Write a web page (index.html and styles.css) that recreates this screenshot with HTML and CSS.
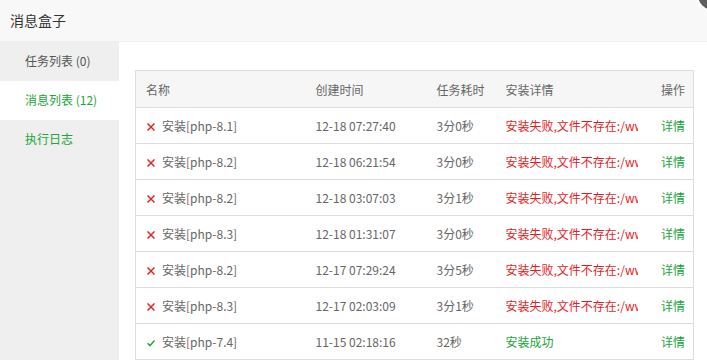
FILE: index.html
```html
<!DOCTYPE html>
<html lang="zh-CN">
<head>
<meta charset="utf-8">
<title>消息盒子</title>
<link rel="stylesheet" href="styles.css">
</head>
<body>
<div class="layer">
  <div class="title">消息盒子</div>
  <span class="close"></span>
  <div class="main">
    <ul class="side">
      <li class="item">任务列表 (0)</li>
      <li class="item active">消息列表 (12)</li>
      <li class="item green">执行日志</li>
    </ul>
    <div class="content">
      <table class="tbl">
        <colgroup>
          <col class="c1"><col class="c2"><col class="c3"><col class="c4"><col class="c5">
        </colgroup>
        <thead>
          <tr><th>名称</th><th>创建时间</th><th>任务耗时</th><th>安装详情</th><th class="r">操作</th></tr>
        </thead>
        <tbody>
          <tr><td><svg class="ic" viewBox="0 0 8 8"><path d="M0.5 0.5L7.5 7.5M7.5 0.5L0.5 7.5" stroke="#e32424" stroke-width="1.5"/></svg>安装[php-8.1]</td><td>12-18 07:27:40</td><td>3分0秒</td><td class="fail"><span class="trunc">安装失败,文件不存在:/www/server/php</span></td><td class="r"><a class="lnk">详情</a></td></tr>
          <tr><td><svg class="ic" viewBox="0 0 8 8"><path d="M0.5 0.5L7.5 7.5M7.5 0.5L0.5 7.5" stroke="#e32424" stroke-width="1.5"/></svg>安装[php-8.2]</td><td>12-18 06:21:54</td><td>3分0秒</td><td class="fail"><span class="trunc">安装失败,文件不存在:/www/server/php</span></td><td class="r"><a class="lnk">详情</a></td></tr>
          <tr><td><svg class="ic" viewBox="0 0 8 8"><path d="M0.5 0.5L7.5 7.5M7.5 0.5L0.5 7.5" stroke="#e32424" stroke-width="1.5"/></svg>安装[php-8.2]</td><td>12-18 03:07:03</td><td>3分1秒</td><td class="fail"><span class="trunc">安装失败,文件不存在:/www/server/php</span></td><td class="r"><a class="lnk">详情</a></td></tr>
          <tr><td><svg class="ic" viewBox="0 0 8 8"><path d="M0.5 0.5L7.5 7.5M7.5 0.5L0.5 7.5" stroke="#e32424" stroke-width="1.5"/></svg>安装[php-8.3]</td><td>12-18 01:31:07</td><td>3分0秒</td><td class="fail"><span class="trunc">安装失败,文件不存在:/www/server/php</span></td><td class="r"><a class="lnk">详情</a></td></tr>
          <tr><td><svg class="ic" viewBox="0 0 8 8"><path d="M0.5 0.5L7.5 7.5M7.5 0.5L0.5 7.5" stroke="#e32424" stroke-width="1.5"/></svg>安装[php-8.2]</td><td>12-17 07:29:24</td><td>3分5秒</td><td class="fail"><span class="trunc">安装失败,文件不存在:/www/server/php</span></td><td class="r"><a class="lnk">详情</a></td></tr>
          <tr><td><svg class="ic" viewBox="0 0 8 8"><path d="M0.5 0.5L7.5 7.5M7.5 0.5L0.5 7.5" stroke="#e32424" stroke-width="1.5"/></svg>安装[php-8.3]</td><td>12-17 02:03:09</td><td>3分1秒</td><td class="fail"><span class="trunc">安装失败,文件不存在:/www/server/php</span></td><td class="r"><a class="lnk">详情</a></td></tr>
          <tr><td><svg class="ic" viewBox="0 0 8 8"><path d="M0.5 4.2L3 6.6L7.6 1.4" stroke="#20a53a" stroke-width="1.5" fill="none"/></svg>安装[php-7.4]</td><td>11-15 02:18:16</td><td>32秒</td><td class="succ">安装成功</td><td class="r"><a class="lnk">详情</a></td></tr>
          <tr><td><svg class="ic" viewBox="0 0 8 8"><path d="M0.5 4.2L3 6.6L7.6 1.4" stroke="#20a53a" stroke-width="1.5" fill="none"/></svg>安装[php-7.4]</td><td>11-15 02:15:02</td><td>30秒</td><td class="succ">安装成功</td><td class="r"><a class="lnk">详情</a></td></tr>
        </tbody>
      </table>
    </div>
  </div>
</div>
</body>
</html>
```

FILE: styles.css
```css
* { box-sizing: border-box; }
html, body {
  margin: 0;
  padding: 0;
  width: 707px;
  height: 360px;
  overflow: hidden;
  background: #fff;
  font-family: "Noto Sans CJK SC", "Noto Sans", sans-serif;
  font-size: 12px;
  color: #666;
}
.layer {
  position: relative;
  width: 707px;
  height: 360px;
}
.title {
  height: 42px;
  line-height: 41px;
  padding-left: 10px;
  font-size: 14px;
  color: #333;
  background: #f8f8f8;
  border-bottom: 1px solid #eee;
}
.close {
  position: absolute;
  left: 698px;
  top: -20px;
  width: 30px;
  height: 30px;
  border-radius: 50%;
  background: #5f5f5f;
  box-shadow: 0 0 0 2px #fff;
}
.main {
  display: flex;
  height: 318px;
}
.side {
  list-style: none;
  margin: 0;
  padding: 0;
  width: 119px;
  flex: none;
  background: #efefef;
}
.item {
  height: 39px;
  line-height: 38px;
  padding-left: 25px;
  color: #555;
  font-size: 12px;
}
.item.active {
  background: #fff;
  color: #20a53a;
}
.item.green { color: #20a53a; }
.content {
  flex: 1;
  padding: 28px 14px 0 16px;
  overflow: hidden;
}
.tbl {
  width: 558px;
  table-layout: fixed;
  border-collapse: collapse;
  border: 1px solid #ddd;
}
.c1 { width: 170px; }
.c2 { width: 121px; }
.c3 { width: 69px; }
.c4 { width: 152px; }
.c5 { width: 46px; }
.tbl th {
  height: 37px;
  background: #f6f6f6;
  font-weight: normal;
  text-align: left;
  padding: 0 10px;
  color: #666;
  border-bottom: 1px solid #ddd;
}
.tbl td {
  height: 36px;
  padding: 0 10px;
  border-bottom: 1px solid #ddd;
  white-space: nowrap;
  overflow: hidden;
  color: #666;
}
.tbl th.r, .tbl td.r {
  text-align: right;
  padding-right: 8px;
  padding-left: 0;
}
.ic {
  display: inline-block;
  width: 8px;
  height: 8px;
  margin: 0 7px 0 1px;
  vertical-align: 0;
}
.tbl td.fail { color: #e41e1e; }
.trunc {
  display: block;
  width: 132px;
  overflow: hidden;
  white-space: nowrap;
}
.tbl td.succ { color: #20a53a; }
.lnk { color: #20a53a; cursor: pointer; }
```
